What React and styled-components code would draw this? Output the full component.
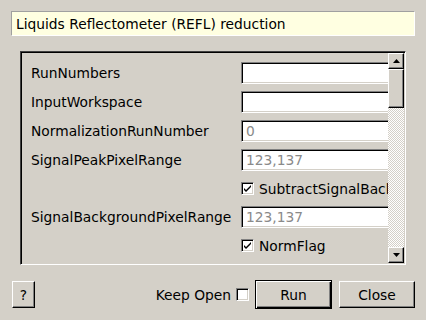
import React from "react";
import styled, { createGlobalStyle } from "styled-components";

const GlobalStyle = createGlobalStyle`
  html, body {
    margin: 0;
    padding: 0;
    background-color: #d4d0c8;
  }
  body {
    font-family: "DejaVu Sans", "Liberation Sans", sans-serif;
    font-size: 13.8px;
    color: #000;
  }
`;

const Dialog = styled.div`
  width: 426px;
  height: 320px;
  box-sizing: border-box;
  padding: 11px 11px 11px 11px;
  display: flex;
  flex-direction: column;
  background-color: #d4d0c8;
`;

const TitleBox = styled.div`
  height: 25px;
  box-sizing: border-box;
  display: flex;
  align-items: center;
  padding-left: 4px;
  background-color: #ffffe1;
  border: 1px solid;
  border-color: #a0a0a0 #ffffff #ffffff #a0a0a0;
  white-space: nowrap;
`;

const Frame = styled.div`
  margin: 15px 9px 0 9px;
  height: 214px;
  box-sizing: border-box;
  display: flex;
  border: 1px solid;
  border-color: #404040 #ffffff #ffffff #404040;
  box-shadow: inset 1px 1px #000, inset -1px -1px #d4d0c8;
  padding: 1px;
`;

const Viewport = styled.div`
  flex: 1;
  overflow: hidden;
  padding: 9px 0 0 9px;
`;

const Form = styled.div`
  display: grid;
  grid-template-columns: 202px 200px;
  column-gap: 8px;
  row-gap: 7px;
  width: 410px;
`;

const Label = styled.div`
  height: ${({ $h }) => $h || 22}px;
  display: flex;
  align-items: center;
  white-space: nowrap;
`;

const Input = styled.div`
  height: 22px;
  box-sizing: border-box;
  display: flex;
  align-items: center;
  padding-left: 4px;
  background-color: #fff;
  color: #8a8a8a;
  border: 1px solid;
  border-color: #808080 #ffffff #ffffff #808080;
  box-shadow: inset 1px 1px #000, inset -1px -1px #d4d0c8;
`;

const CheckRow = styled.div`
  height: 21px;
  display: flex;
  align-items: center;
  gap: 5px;
  white-space: nowrap;
`;

const Box = styled.span`
  width: 13px;
  height: 13px;
  box-sizing: border-box;
  display: inline-flex;
  align-items: center;
  justify-content: center;
  background-color: #fff;
  border: 1px solid;
  border-color: #808080 #ffffff #ffffff #808080;
  box-shadow: inset 1px 1px #000, inset -1px -1px #d4d0c8;
  flex-shrink: 0;
`;

const ScrollBar = styled.div`
  width: 16px;
  display: flex;
  flex-direction: column;
`;

const ArrowButton = styled.div`
  height: 16px;
  box-sizing: border-box;
  display: flex;
  align-items: center;
  justify-content: center;
  background-color: #d4d0c8;
  border: 1px solid;
  border-color: #ffffff #000 #000 #ffffff;
  box-shadow: inset -1px -1px #808080;
`;

const Thumb = styled.div`
  height: 39px;
  box-sizing: border-box;
  background-color: #d4d0c8;
  border: 1px solid;
  border-color: #ffffff #000 #000 #ffffff;
  box-shadow: inset -1px -1px #808080;
`;

const Trough = styled.div`
  flex: 1;
  background: repeating-conic-gradient(#ffffff 0 25%, #d4d0c8 0 50%) 0 0 / 2px 2px;
`;

const BottomBar = styled.div`
  margin-top: 15px;
  height: 29px;
  display: flex;
  align-items: center;
`;

const Button = styled.button`
  font: inherit;
  color: #000;
  width: ${({ $w }) => $w}px;
  height: 27px;
  box-sizing: border-box;
  padding: 0;
  background-color: #d4d0c8;
  border: 1px solid;
  border-color: #ffffff #000 #000 #ffffff;
  box-shadow: inset -1px -1px #808080;
  margin-left: ${({ $ml }) => $ml || 0}px;
`;

const DefaultButton = styled(Button)`
  height: 29px;
  border: 1px solid #000;
  box-shadow: inset 1px 1px #fff, inset -1px -1px #000, inset -2px -2px #808080;
`;

const Spacer = styled.div`
  flex: 1;
`;

const KeepOpen = styled.label`
  display: flex;
  align-items: center;
  gap: 5px;
  margin-right: 6px;
`;

const Check = () => (
  <svg width="9" height="9" viewBox="0 0 9 9">
    <path d="M1 4 L3 6 L8 1 L8 3 L3 8 L1 6 Z" fill="#000" />
  </svg>
);

const Arrow = ({ down }) => (
  <svg width="7" height="4" viewBox="0 0 7 4">
    <path d={down ? "M0 0 H7 L3.5 4 Z" : "M0 4 H7 L3.5 0 Z"} fill="#000" />
  </svg>
);

const rows = [
  { label: "RunNumbers", value: "" },
  { label: "InputWorkspace", value: "" },
  { label: "NormalizationRunNumber", value: "0" },
  { label: "SignalPeakPixelRange", value: "123,137" },
  { check: "SubtractSignalBackground" },
  { label: "SignalBackgroundPixelRange", value: "123,137" },
  { check: "NormFlag" },
];

const App = () => {
  return (
    <Dialog>
      <GlobalStyle />
      <TitleBox>Liquids Reflectometer (REFL) reduction</TitleBox>
      <Frame>
        <Viewport>
          <Form>
            {rows.map((r, i) =>
              r.check ? (
                <React.Fragment key={i}>
                  <Label $h={21} />
                  <CheckRow>
                    <Box>
                      <Check />
                    </Box>
                    {r.check}
                  </CheckRow>
                </React.Fragment>
              ) : (
                <React.Fragment key={i}>
                  <Label>{r.label}</Label>
                  <Input>{r.value}</Input>
                </React.Fragment>
              )
            )}
          </Form>
        </Viewport>
        <ScrollBar>
          <ArrowButton>
            <Arrow />
          </ArrowButton>
          <Thumb />
          <Trough />
          <ArrowButton>
            <Arrow down />
          </ArrowButton>
        </ScrollBar>
      </Frame>
      <BottomBar>
        <Button $w={23} $ml={1}>?</Button>
        <Spacer />
        <KeepOpen>
          Keep Open
          <Box />
        </KeepOpen>
        <DefaultButton $w={77}>Run</DefaultButton>
        <Button $w={76} $ml={7}>Close</Button>
      </BottomBar>
    </Dialog>
  );
};

export default App;
